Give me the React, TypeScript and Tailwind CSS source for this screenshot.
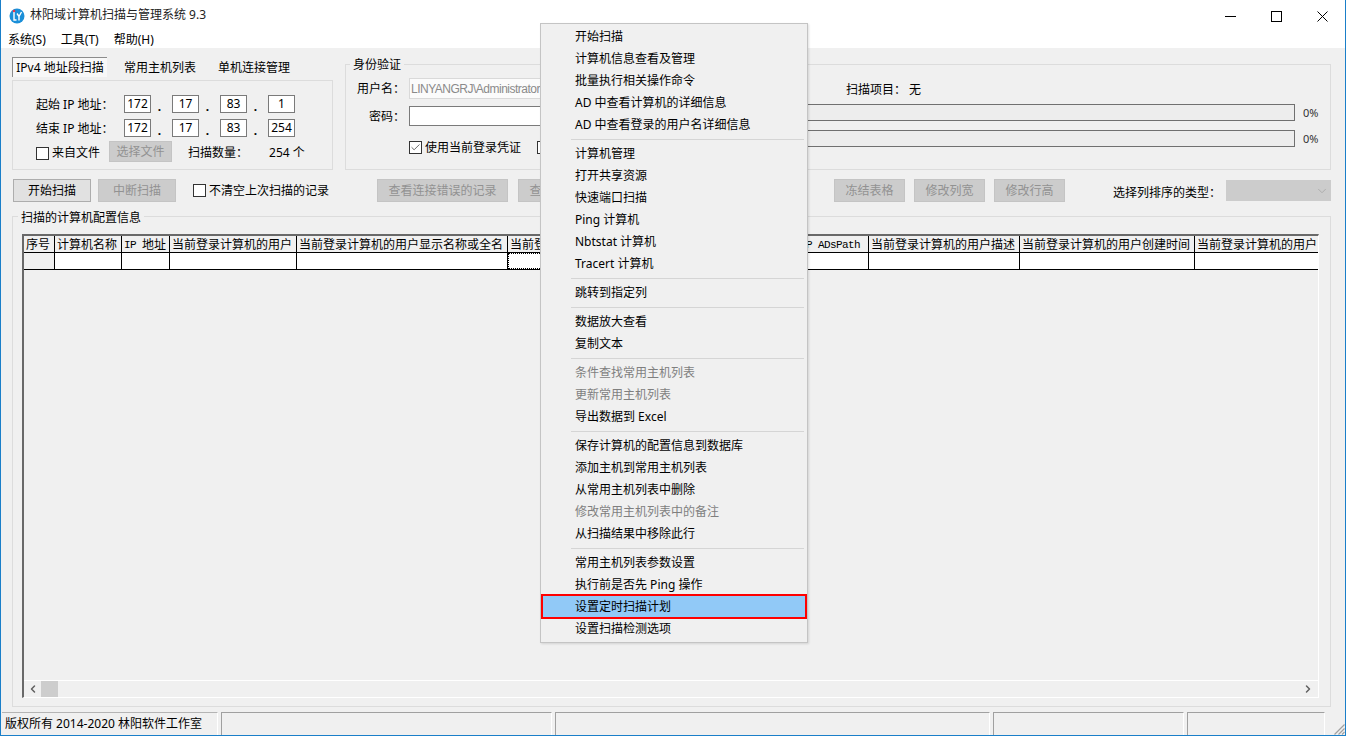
import React from 'react';
import { ChevronDown, ChevronLeft, ChevronRight, Check } from 'lucide-react';

type MenuEntry = { label: string; disabled?: boolean; active?: boolean } | 'sep';

const menuEntries: MenuEntry[] = [
	{ label: '开始扫描' },
	{ label: '计算机信息查看及管理' },
	{ label: '批量执行相关操作命令' },
	{ label: 'AD 中查看计算机的详细信息' },
	{ label: 'AD 中查看登录的用户名详细信息' },
	'sep',
	{ label: '计算机管理' },
	{ label: '打开共享资源' },
	{ label: '快速端口扫描' },
	{ label: 'Ping 计算机' },
	{ label: 'Nbtstat 计算机' },
	{ label: 'Tracert 计算机' },
	'sep',
	{ label: '跳转到指定列' },
	'sep',
	{ label: '数据放大查看' },
	{ label: '复制文本' },
	'sep',
	{ label: '条件查找常用主机列表', disabled: true },
	{ label: '更新常用主机列表', disabled: true },
	{ label: '导出数据到 Excel' },
	'sep',
	{ label: '保存计算机的配置信息到数据库' },
	{ label: '添加主机到常用主机列表' },
	{ label: '从常用主机列表中删除' },
	{ label: '修改常用主机列表中的备注', disabled: true },
	{ label: '从扫描结果中移除此行' },
	'sep',
	{ label: '常用主机列表参数设置' },
	{ label: '执行前是否先 Ping 操作' },
	{ label: '设置定时扫描计划', active: true },
	{ label: '设置扫描检测选项' },
];

const columns = [
	{ width: 'w-[31px]', title: <>序号</> },
	{ width: 'w-[67px]', title: <>计算机名称</> },
	{ width: 'w-[48px]', title: <><Mono>IP </Mono>地址</> },
	{ width: 'w-[127px]', title: <>当前登录计算机的用户</> },
	{ width: 'w-[211px]', title: <>当前登录计算机的用户显示名称或全名</> },
	{ width: 'w-[188px]', title: <>当前登录计算机的用户所属组织单位</> },
	{ width: 'w-[173px]', title: <>当前登录计算机的<Mono> IP ADsPath</Mono></> },
	{ width: 'w-[151px]', title: <>当前登录计算机的用户描述</> },
	{ width: 'w-[175px]', title: <>当前登录计算机的用户创建时间</> },
	{ width: 'w-[160px]', title: <>当前登录计算机的用户</> },
];

function Mono({ children }: { children: React.ReactNode }) {
	return <span className="font-['Liberation_Mono',monospace] text-[11px] tracking-[-0.6px] whitespace-pre">{children}</span>;
}

function Checkbox({ checked = false }: { checked?: boolean }) {
	return (
		<span className="w-[13px] h-[13px] shrink-0 border border-[#333] bg-white flex items-center justify-center">
			{checked && <Check size={11} strokeWidth={1.6} className="text-[#333]" />}
		</span>
	);
}

function Button({ label, width, height = 'h-[23px]', disabled = false }: { label: string; width: string; height?: string; disabled?: boolean }) {
	return (
		<div className={`${width} ${height} shrink-0 flex items-center justify-center border pt-[1px] ${disabled ? 'bg-[#cccccc] border-[#c4c4c4] text-[#929292]' : 'bg-[#e1e1e1] border-[#adadad] text-black'}`}>
			{label}
		</div>
	);
}

function IpRow({ label, values }: { label: string; values: string[] }) {
	return (
		<div className="flex items-center h-[18px]">
			<span className="w-[88px] shrink-0 pt-[1px]">{label}</span>
			{values.map((v, i) => (
				<React.Fragment key={i}>
					<span className="w-[27px] h-[18px] shrink-0 bg-white border border-[#7a7a7a] flex items-center justify-center">{v}</span>
					{i < 3 && <span className="w-[21px] text-center font-bold leading-none pt-[5px] pr-[4px]">.</span>}
				</React.Fragment>
			))}
		</div>
	);
}

function ProgressRow() {
	return (
		<div className="flex items-center">
			<div className="w-[750px] h-[17px] shrink-0 bg-[#ededed] border border-[#707070]" />
			<span className="ml-[8px] text-[11px] text-[#333]">0%</span>
		</div>
	);
}

function Logo() {
	return (
		<svg width="16" height="16" viewBox="0 0 16 16" className="shrink-0">
			<circle cx="8" cy="8" r="7.5" fill="#1b8fd8" />
			<path d="M5 3.5V12H7.5M8 5.5L10 8.5L12.5 4M10 8.5V12.5" fill="none" stroke="#fff" strokeWidth="1.4" />
			<circle cx="5" cy="3" r="1.3" fill="#e8364a" />
		</svg>
	);
}

export default function App() {
	return (
		<div className="relative w-[1346px] h-[736px] overflow-hidden flex flex-col bg-[#f0f0f0] border-x border-b border-[#1a7fc9] text-[12px] leading-[16px] text-black font-['Noto_Sans','Noto_Sans_CJK_SC',sans-serif]">
			{/* Title bar */}
			<div className="h-[32px] shrink-0 bg-white flex items-center pl-[8px]">
				<Logo />
				<span className="ml-[5px] text-[#222] pb-[2px]">林阳域计算机扫描与管理系统 9.3</span>
				<div className="ml-auto mr-[17px] flex items-center">
					<span className="w-[11px] h-px bg-black" />
					<span className="ml-[35px] w-[11px] h-[11px] border border-black" />
					<svg width="11" height="11" viewBox="0 0 11 11" className="ml-[35px]">
						<path d="M0.5 0.5L10.5 10.5M10.5 0.5L0.5 10.5" stroke="#000" strokeWidth="1" />
					</svg>
				</div>
			</div>

			{/* Menu bar */}
			<div className="h-[16px] shrink-0 bg-white flex items-center pl-[7px] gap-[15px]">
				<span>系统(S)</span>
				<span>工具(T)</span>
				<span>帮助(H)</span>
			</div>

			{/* Tabs, IP range and credentials */}
			<div className="flex h-[122px] shrink-0">
				<div className="ml-[11px] w-[321px] flex flex-col pt-[9px]">
					<div className="flex h-[20px] items-center">
						<span className="w-[95px] h-[20px] pt-[1px] flex items-center justify-center border-l border-t border-[#8c8c8c] bg-[#f8f8f8]">IPv4 地址段扫描</span>
						<span className="ml-[17px] pt-[1px]">常用主机列表</span>
						<span className="ml-[22px] pt-[1px]">单机连接管理</span>
					</div>
					<div className="mt-[3px] h-[90px] border border-[#dcdcdc] pl-[23px] pt-[14px] flex flex-col">
						<IpRow label="起始 IP 地址：" values={['172', '17', '83', '1']} />
						<div className="mt-[6px]">
							<IpRow label="结束 IP 地址：" values={['172', '17', '83', '254']} />
						</div>
						<div className="mt-[4px] flex items-center h-[21px]">
							<span className="mt-[3px]"><Checkbox /></span>
							<span className="ml-[3px] mt-[3px]">来自文件</span>
							<div className="ml-[9px]"><Button label="选择文件" width="w-[63px]" height="h-[21px]" disabled /></div>
							<span className="ml-[16px] mt-[3px] w-[53px] whitespace-nowrap">扫描数量：</span>
							<span className="ml-[28px] mt-[2px]">254 个</span>
						</div>
					</div>
				</div>

				<div className="relative ml-[12px] mt-[16px] w-[986px] h-[106px] border border-[#dcdcdc] flex">
					<span className="absolute -top-[8px] left-[4px] px-[3px] bg-[#f0f0f0]">身份验证</span>
					<div className="w-[199px] shrink-0 pt-[13px] flex flex-col">
						<div className="flex items-center h-[21px]">
							<span className="w-[59px] text-right whitespace-nowrap">用户名：</span>
							<span className="ml-[4px] flex-1 h-[21px] pl-[1px] flex items-center bg-[#fbfbfb] border border-[#d9d9d9] text-[#8a8a8a] whitespace-nowrap overflow-hidden tracking-[-0.5px] font-['Liberation_Sans',sans-serif]">LINYANGRJ\Administrator</span>
						</div>
						<div className="flex items-center h-[20px] mt-[7px]">
							<span className="w-[59px] text-right pt-[2px]">密码：</span>
							<span className="ml-[4px] flex-1 h-[20px] bg-white border border-[#7a7a7a]" />
						</div>
						<div className="flex items-center h-[13px] mt-[15px] pl-[63px]">
							<Checkbox checked />
							<span className="ml-[3px] whitespace-nowrap">使用当前登录凭证</span>
							<span className="ml-[16px]"><Checkbox /></span>
						</div>
					</div>
					<div className="flex flex-col pt-[17px]">
						<div className="h-[16px] pl-[301px] whitespace-nowrap">扫描项目： 无</div>
						<div className="mt-[6px]"><ProgressRow /></div>
						<div className="mt-[9px]"><ProgressRow /></div>
					</div>
				</div>
			</div>

			{/* Action buttons */}
			<div className="flex items-center h-[23px] shrink-0 mt-[9px] pl-[12px]">
				<Button label="开始扫描" width="w-[78px]" />
				<div className="ml-[7px]"><Button label="中断扫描" width="w-[78px]" disabled /></div>
				<span className="ml-[17px]"><Checkbox /></span>
				<span className="ml-[3px] pt-[1px] whitespace-nowrap">不清空上次扫描的记录</span>
				<div className="ml-[48px]"><Button label="查看连接错误的记录" width="w-[131px]" disabled /></div>
				<div className="ml-[10px]"><Button label="查看扫描的结果记录" width="w-[131px]" disabled /></div>
				<div className="ml-[185px]"><Button label="冻结表格" width="w-[71px]" disabled /></div>
				<div className="ml-[9px]"><Button label="修改列宽" width="w-[71px]" disabled /></div>
				<div className="ml-[9px]"><Button label="修改行高" width="w-[71px]" disabled /></div>
				<span className="ml-[48px] w-[113px] pt-[4px] whitespace-nowrap">选择列排序的类型：</span>
				<div className="w-[105px] h-[21px] bg-[#cccccc] flex items-center justify-end pr-[2px]">
					<ChevronDown size={14} strokeWidth={1.5} className="text-[#a8a8a8]" />
				</div>
			</div>

			{/* Result grid */}
			<div className="relative ml-[11px] mt-[14px] w-[1319px] h-[491px] shrink-0 border border-[#dcdcdc] pl-[9px] pt-[17px]">
				<span className="absolute -top-[7px] left-[5px] px-[3px] bg-[#f0f0f0]">扫描的计算机配置信息</span>
				<div className="w-[1297px] h-[464px] border-t-2 border-l-2 border-[#696969] border-r border-b border-r-white border-b-white flex flex-col overflow-hidden">
					<div className="flex h-[17px] shrink-0 border-b border-black">
						{columns.map((col, i) => (
							<div key={i} className={`${col.width} shrink-0 border-r border-black pl-[2px] pt-[1px] flex items-center whitespace-nowrap overflow-hidden`}>
								{col.title}
							</div>
						))}
					</div>
					<div className="flex h-[17px] shrink-0 border-b border-black">
						{columns.map((col, i) => (
							<div key={i} className={`${col.width} shrink-0 border-r border-black ${i === 0 ? 'bg-[#f0f0f0]' : 'bg-white'} ${i === 5 ? 'border border-dotted' : ''}`} />
						))}
					</div>
					<div className="flex-1" />
					<div className="h-[17px] shrink-0 border-t border-white flex items-center">
						<ChevronLeft size={12} strokeWidth={3} className="ml-[3px] text-[#606060]" />
						<span className="ml-[2px] w-[17px] h-[16px] bg-[#cdcdcd]" />
						<ChevronRight size={12} strokeWidth={3} className="ml-auto mr-[4px] text-[#606060]" />
					</div>
				</div>
			</div>

			{/* Status bar */}
			<div className="mt-[5px] flex-1 flex gap-[3px] pl-px relative">
				<div className="w-[216px] border-t border-r border-t-[#b4b4b4] border-r-white pl-[3px] pt-[3px] whitespace-nowrap">版权所有 2014-2020 林阳软件工作室</div>
				<div className="w-[331px] border-t border-l border-r border-t-[#a0a0a0] border-l-[#a0a0a0] border-r-white" />
				<div className="w-[435px] border-t border-l border-r border-t-[#a0a0a0] border-l-[#a0a0a0] border-r-white" />
				<div className="w-[191px] border-t border-l border-r border-t-[#a0a0a0] border-l-[#a0a0a0] border-r-white" />
				<div className="w-[138px] border-t border-l border-r border-t-[#a0a0a0] border-l-[#a0a0a0] border-r-white" />
				<svg width="12" height="12" viewBox="0 0 12 12" className="absolute right-0 bottom-0">
					<path d="M11.5 1.5L1.5 11.5M11.5 5.5L5.5 11.5M11.5 9L9 11.5" stroke="#a0a0a0" strokeWidth="1.2" />
				</svg>
			</div>

			{/* Context menu */}
			<div className="absolute left-[539px] top-[23px] w-[268px] h-[620px] bg-[#f0f0f0] border border-[#c4c4c4] py-[1px] shadow-[1px_1px_2px_rgba(0,0,0,0.12)]">
				{menuEntries.map((entry, i) => {
					if (entry === 'sep') {
						return (
							<div key={i} className="h-[7px] flex items-center pl-[30px] pr-[3px] pt-[2px]">
								<div className="w-full h-px bg-[#d5d5d5]" />
							</div>
						);
					}
					return (
						<div key={i} className={`relative h-[22px] flex items-center pl-[34px] pt-[2px] whitespace-nowrap ${entry.disabled ? 'text-[#7f7f7f]' : 'text-black'}`}>
							{entry.active && <span className="absolute left-0 right-0 -top-[1px] -bottom-[2px] bg-[#91c9f7] border-2 border-[#ff0000]" />}
							<span className="relative">{entry.label}</span>
						</div>
					);
				})}
			</div>
		</div>
	);
}
